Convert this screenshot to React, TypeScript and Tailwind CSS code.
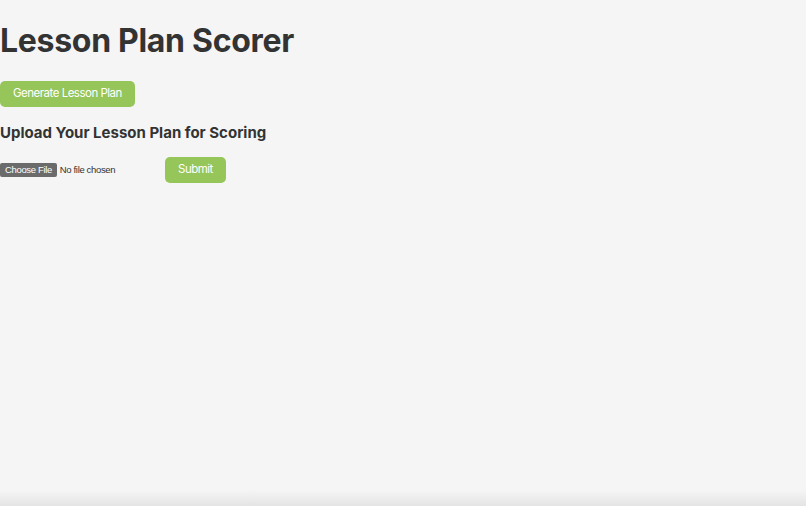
export default function App() {
  return (
    <div className="relative flex h-[506px] w-full flex-col overflow-hidden bg-[#f5f5f5] font-['Inter',sans-serif] text-[#333333]">
      <h1 className="mt-[21px] text-[32px] font-bold leading-[40px] tracking-[-0.3px]">Lesson Plan Scorer</h1>

      <div className="mt-[20px] flex">
        <button className="h-[26px] rounded-[5px] bg-[#96c55a] px-[13px] text-[11.5px] tracking-[-0.5px] text-white">
          Generate Lesson Plan
        </button>
      </div>

      <h2 className="mt-[16px] text-[15px] font-bold leading-[20px]">Upload Your Lesson Plan for Scoring</h2>

      <div className="mt-[14px] flex items-center">
        <div className="flex w-[165px] items-center font-['Liberation_Sans',sans-serif] text-[9.5px] tracking-[-0.35px]">
          <span className="flex h-[14px] items-center rounded-[2px] bg-[#6b6b6b] px-[5px] text-white">Choose File</span>
          <span className="ml-[3px] text-[#333333]">No file chosen</span>
        </div>
        <button className="h-[26px] rounded-[5px] bg-[#96c55a] px-[13px] text-[11.5px] tracking-[-0.5px] text-white">Submit</button>
      </div>

      <div className="absolute inset-x-0 bottom-0 h-[16px] bg-gradient-to-b from-transparent to-[#e4e4e4]" />
    </div>
  );
}
